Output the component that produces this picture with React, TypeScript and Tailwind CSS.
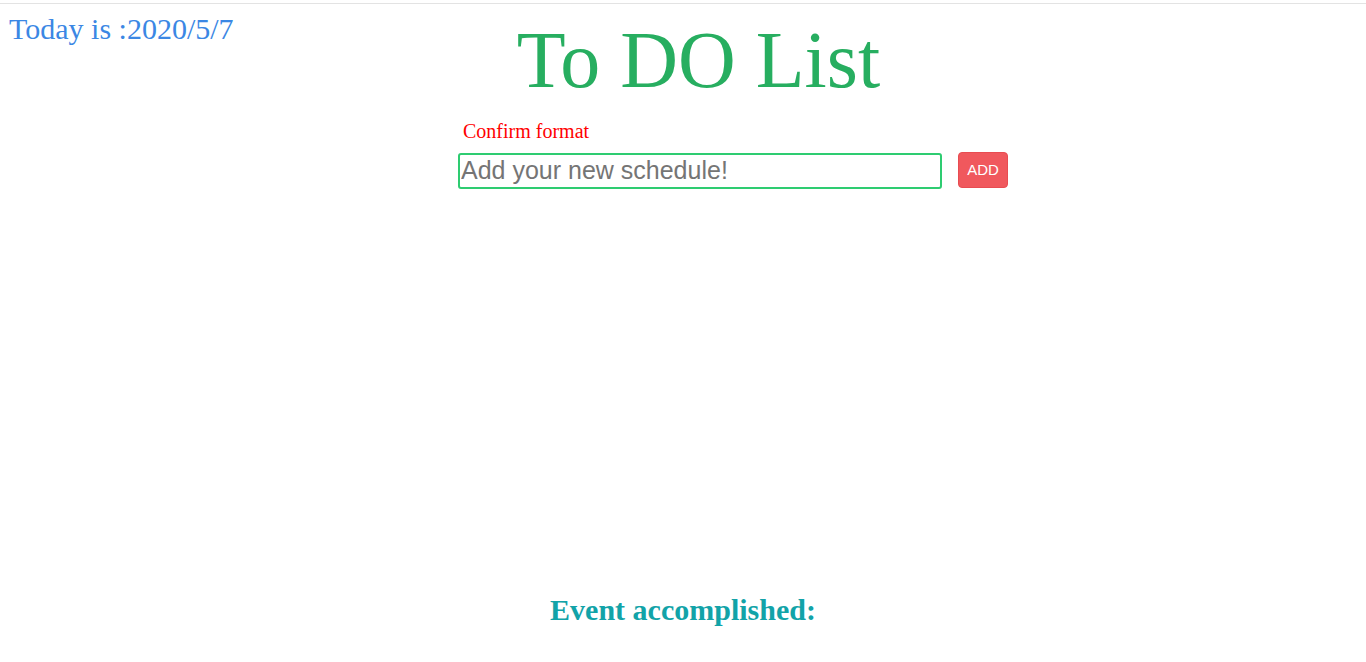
export default function App() {
  return (
    <div className="min-h-screen bg-white pt-[3px]">
      <div className="border-t border-[#e3e3e3]" />
      <div className="relative">
        {/* Date */}
        <div className="absolute left-[9px] top-[7px] font-['Liberation_Serif',serif] text-[30px] leading-[36px] text-[#3b87e4]">
          Today is :2020/5/7
        </div>

        {/* Title */}
        <h1 className="pl-[31px] pt-[11px] text-center font-['Liberation_Serif',serif] text-[80px] leading-[90px] text-[#27ae60]">
          To DO List
        </h1>

        {/* Form */}
        <div className="mx-auto mt-[14px] w-[550px] pl-[100px] box-content">
          <p className="pl-[5px] font-['Liberation_Serif',serif] text-[20px] leading-[24px] text-[#ff0000]">
            Confirm format
          </p>
          <div className="mt-[10px] flex items-center gap-[16px]">
            <input
              type="text"
              placeholder="Add your new schedule!"
              className="h-[36px] w-[484px] rounded-[3px] border-2 border-[#2ecc71] px-[1px] font-['Liberation_Sans',Arial,sans-serif] text-[25px] text-black outline-none placeholder:text-[#757575]"
            />
            <button className="-mt-[2px] h-[36px] w-[50px] rounded-[4px] border border-[#e84c51] bg-[#f0585d] font-['Liberation_Sans',Arial,sans-serif] text-[15px] text-white">
              ADD
            </button>
          </div>
        </div>

        {/* Accomplished */}
        <h2 className="mt-[403px] text-center font-['Liberation_Serif',serif] text-[30px] font-bold leading-[36px] text-[#12a3a8]">
          Event accomplished:
        </h2>
      </div>
    </div>
  );
}
